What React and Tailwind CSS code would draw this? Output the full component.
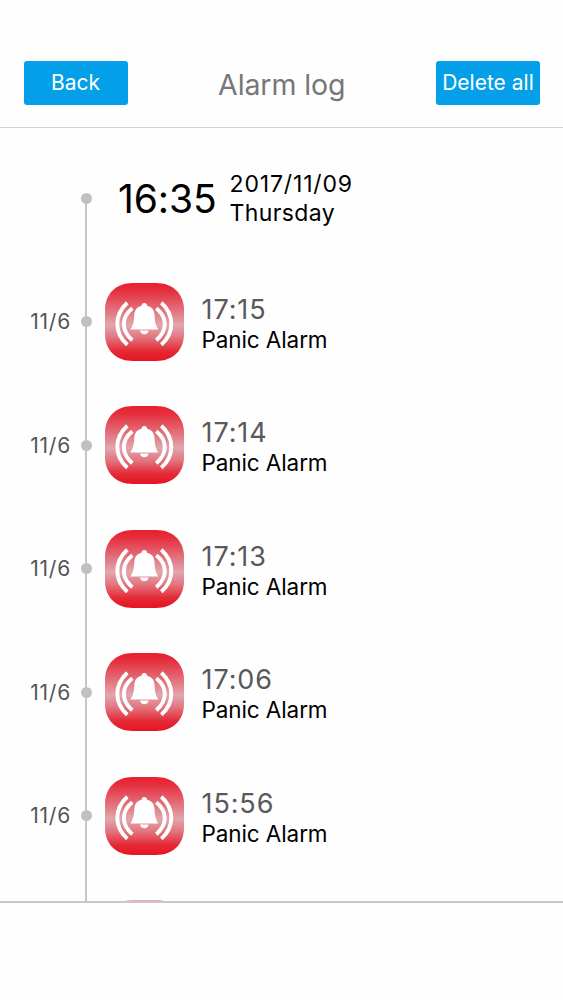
const alarms = [
  { date: "11/6", time: "17:15", label: "Panic Alarm" },
  { date: "11/6", time: "17:14", label: "Panic Alarm" },
  { date: "11/6", time: "17:13", label: "Panic Alarm" },
  { date: "11/6", time: "17:06", label: "Panic Alarm" },
  { date: "11/6", time: "15:56", label: "Panic Alarm" },
];

function AlarmIcon() {
  return (
    <svg viewBox="0 0 79 78" className="block h-[78px] w-[79px]">
      <defs>
        <linearGradient id="alarmRed" x1="0" y1="0" x2="0" y2="1">
          <stop offset="0" stopColor="#e81f2d" />
          <stop offset="0.1" stopColor="#e52f3d" />
          <stop offset="0.35" stopColor="#e2717c" />
          <stop offset="0.54" stopColor="#e2a6ad" />
          <stop offset="0.7" stopColor="#e2747e" />
          <stop offset="0.87" stopColor="#e42a37" />
          <stop offset="1" stopColor="#e81422" />
        </linearGradient>
      </defs>
      <path
        d="M28 0H51C68 0 79 11 79 27V51C79 67 68 78 51 78H28C11 78 0 67 0 51V27C0 11 11 0 28 0Z"
        fill="url(#alarmRed)"
      />
      <g fill="none" stroke="#fff" strokeWidth="3.9">
        <path d="M22.3 19.8C9 32 9 50 22.3 61.8" />
        <path d="M27.3 25.2C16 34.5 16 47.5 27.3 57.2" />
        <path d="M56.3 19.8C69.6 32 69.6 50 56.3 61.8" />
        <path d="M51.3 25.2C62.6 34.5 62.6 47.5 51.3 57.2" />
      </g>
      <path
        d="M39.3 20C41 20 42 21.1 42 22.7C46.8 23.8 49.2 27 49.5 31.5C49.8 38 50.3 42 53.3 46.4H25.3C28.5 42 29 38 29.3 31.5C29.6 27 32 23.8 36.6 22.7C36.6 21.1 37.6 20 39.3 20Z"
        fill="#fff"
      />
      <path d="M35 47.6H43.6C43.1 50.2 41.5 51.3 39.3 51.3S35.5 50.2 35 47.6Z" fill="#fff" />
    </svg>
  );
}

function Rail({ first }) {
  return (
    <div className="flex h-full w-[11px] flex-col items-center">
      <div className={first ? "flex-1" : "w-[1.5px] flex-1 bg-[#c8c5c9]"} />
      <div className="size-[11px] rounded-full bg-[#c1bfc3]" />
      <div className="w-[1.5px] flex-1 bg-[#c8c5c9]" />
    </div>
  );
}

function HeaderButton({ children }) {
  return (
    <button className="flex h-[43.5px] w-[104px] items-center justify-center rounded-[3px] bg-[#03a0e9] text-[21px] whitespace-nowrap text-white">
      {children}
    </button>
  );
}

export default function App() {
  return (
    <div className="h-[1000px] w-full overflow-hidden bg-[#fefefe] font-['Inter',sans-serif] text-black">
      <header className="flex h-[128px] items-end justify-between border-b-[1.5px] border-[#d3d3d5] pr-[23px] pb-[22.5px] pl-[23.5px]">
        <HeaderButton>Back</HeaderButton>
        <h1 className="mb-[2.5px] text-[28.5px] leading-[34px] tracking-[-0.1px] text-[#77767a]">Alarm log</h1>
        <HeaderButton>Delete all</HeaderButton>
      </header>

      <main className="h-[774.5px] overflow-hidden border-b-2 border-[#cac7ca] pt-[8.25px]">
        <div className="flex h-[123.5px] items-center pl-[80.5px]">
          <Rail first />
          <div className="ml-[26.5px] w-[111.5px] text-[39px] leading-none tracking-[-0.1px]">16:35</div>
          <div className="pt-[2px] text-[23px] leading-[29px]">
            <div className="tracking-[0.85px]">2017/11/09</div>
            <div className="tracking-[0.4px]">Thursday</div>
          </div>
        </div>

        {alarms.map((alarm) => (
          <div key={alarm.time} className="flex h-[123.5px] items-center">
            <div className="w-[71px] pt-px text-right text-[21px] tracking-[0.8px] text-[#555457]">
              {alarm.date}
            </div>
            <div className="ml-[9.5px] h-full">
              <Rail />
            </div>
            <div className="ml-[13px] w-[97px]">
              <AlarmIcon />
            </div>
            <div className="pt-[5.5px]">
              <div className="text-[27px] leading-[31px] tracking-[0.9px] text-[#59585b]">{alarm.time}</div>
              <div className="text-[22.5px] leading-[30px] tracking-[-0.1px]">{alarm.label}</div>
            </div>
          </div>
        ))}

        {/* top edge of the next entry, cut by the bottom bar */}
        <div className="flex h-[123.5px] items-center pl-[80.5px]">
          <Rail />
          <div className="ml-[13px] opacity-40">
            <AlarmIcon />
          </div>
        </div>
      </main>
    </div>
  );
}
